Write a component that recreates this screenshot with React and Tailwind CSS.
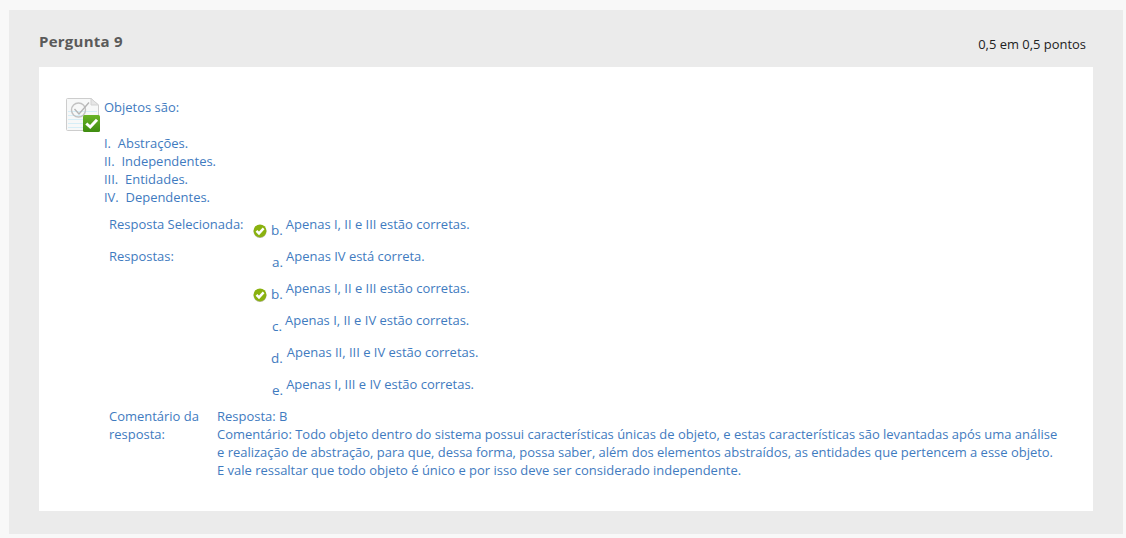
const respostas = [
  { letra: "a.", texto: "Apenas IV está correta.", letraCls: "ml-[19px]", textoCls: "ml-[3px]" },
  { letra: "b.", texto: "Apenas I, II e III estão corretas.", certa: true, letraCls: "ml-[4px]", textoCls: "ml-[3px]" },
  { letra: "c.", texto: "Apenas I, II e IV estão corretas.", letraCls: "ml-[19px]", textoCls: "ml-[3px]" },
  { letra: "d.", texto: "Apenas II, III e IV estão corretas.", letraCls: "ml-[18px]", textoCls: "ml-[4px]" },
  { letra: "e.", texto: "Apenas I, III e IV estão corretas.", letraCls: "ml-[19px]", textoCls: "ml-[3px]" },
];

const CheckVerde = () => (
  <svg width="14" height="14" viewBox="0 0 14 14" className="shrink-0 mt-[9px] mr-[0px]">
    <circle cx="7" cy="7.4" r="6.5" fill="#5f6b1c" opacity="0.5" />
    <circle cx="7" cy="6.8" r="6.4" fill="#8ab20f" />
    <path d="M3.5 6.8 L6 9.4 L10.6 4.4" fill="none" stroke="#fff" strokeWidth="2.4" />
  </svg>
);

const IconeQuestao = () => (
  <svg width="35" height="35" viewBox="0 0 35 35" className="shrink-0">
    <defs>
      <linearGradient id="badge" x1="0" y1="0" x2="0" y2="1">
        <stop offset="0" stopColor="#69b426" />
        <stop offset="1" stopColor="#3f8c10" />
      </linearGradient>
    </defs>
    <path d="M1.5 0.5 H25 L32.5 7 V31.5 Q32.5 32.5 31.5 32.5 H1.5 Q0.5 32.5 0.5 31.5 V1.5 Q0.5 0.5 1.5 0.5 Z" fill="#f7f8f8" stroke="#cdcdcd" />
    <path d="M25 0.5 V7 H32.5 Z" fill="#e6e6e6" stroke="#d2d2d2" />
    <path d="M2 13.5 H31 M2 17.5 H31 M2 21.5 H31 M2 25.5 H31 M2 29.5 H31" stroke="#d6eef7" />
    <circle cx="12.5" cy="12" r="7" fill="none" stroke="#c2c2c2" strokeWidth="1.4" />
    <path d="M8.5 11 L13 16 L23 4.5" fill="none" stroke="#b5b5b5" strokeWidth="1.4" />
    <rect x="17" y="17" width="17" height="17" rx="1.5" fill="url(#badge)" />
    <path d="M20.3 25.5 L24.2 29 L31 21.8" fill="none" stroke="#fff" strokeWidth="3" />
  </svg>
);

const LinhaResposta = ({ item }) => (
  <div className="flex h-8 items-start">
    {item.certa && <CheckVerde />}
    <span className={`text-[13.5px] leading-[18px] mt-[6px] ${item.letraCls}`}>{item.letra}</span>
    <span className={item.textoCls}>{item.texto}</span>
  </div>
);

export default function App() {
  return (
    <div className="h-[538px] bg-[#f8f8f8] pt-[10px] pb-1 pl-[9px] pr-[3px] overflow-hidden" style={{ fontFamily: '"Open Sans", sans-serif' }}>
      <div className="h-[524px] bg-[#ebebeb] px-[30px]">
        {/* Cabeçalho */}
        <div className="flex h-[57px] justify-between">
          <h3 className="mt-[21px] text-[15px] leading-5 font-bold text-[#5a5a5a] tracking-[0.25px]">Pergunta 9</h3>
          <span className="mt-[25px] mr-[7px] text-[12.95px] leading-[18px] text-[#222]">0,5 em 0,5 pontos</span>
        </div>
        {/* Conteúdo */}
        <div className="h-[444px] bg-white pt-[31px] pl-[27px] text-[12.98px] leading-[18px] text-[#3f7bc0]">
          <div className="flex">
            <IconeQuestao />
            <div className="ml-[3px]">
              <p>Objetos são:</p>
              <div className="mt-[18px]">
                <p>I.&nbsp; Abstrações.</p>
                <p>II.&nbsp; Independentes.</p>
                <p>III.&nbsp; Entidades.</p>
                <p>IV.&nbsp; Dependentes.</p>
              </div>
            </div>
          </div>
          <div className="flex mt-[9px] pl-[43px]">
            <div className="w-[144px]">Resposta Selecionada:</div>
            <LinhaResposta item={respostas[1]} />
          </div>
          <div className="flex pl-[43px]">
            <div className="w-[144px]">Respostas:</div>
            <div>
              {respostas.map((item) => (
                <LinhaResposta key={item.letra} item={item} />
              ))}
            </div>
          </div>
          <div className="flex pl-[43px]">
            <div className="w-[108px]">Comentário da resposta:</div>
            <div className="w-[845px]">
              <p>Resposta: B</p>
              <p>Comentário: Todo objeto dentro do sistema possui características únicas de objeto, e estas características são levantadas após uma análise e realização de abstração, para que, dessa forma, possa saber, além dos elementos abstraídos, as entidades que pertencem a esse objeto. E vale ressaltar que todo objeto é único e por isso deve ser considerado independente.</p>
            </div>
          </div>
        </div>
      </div>
    </div>
  );
}
